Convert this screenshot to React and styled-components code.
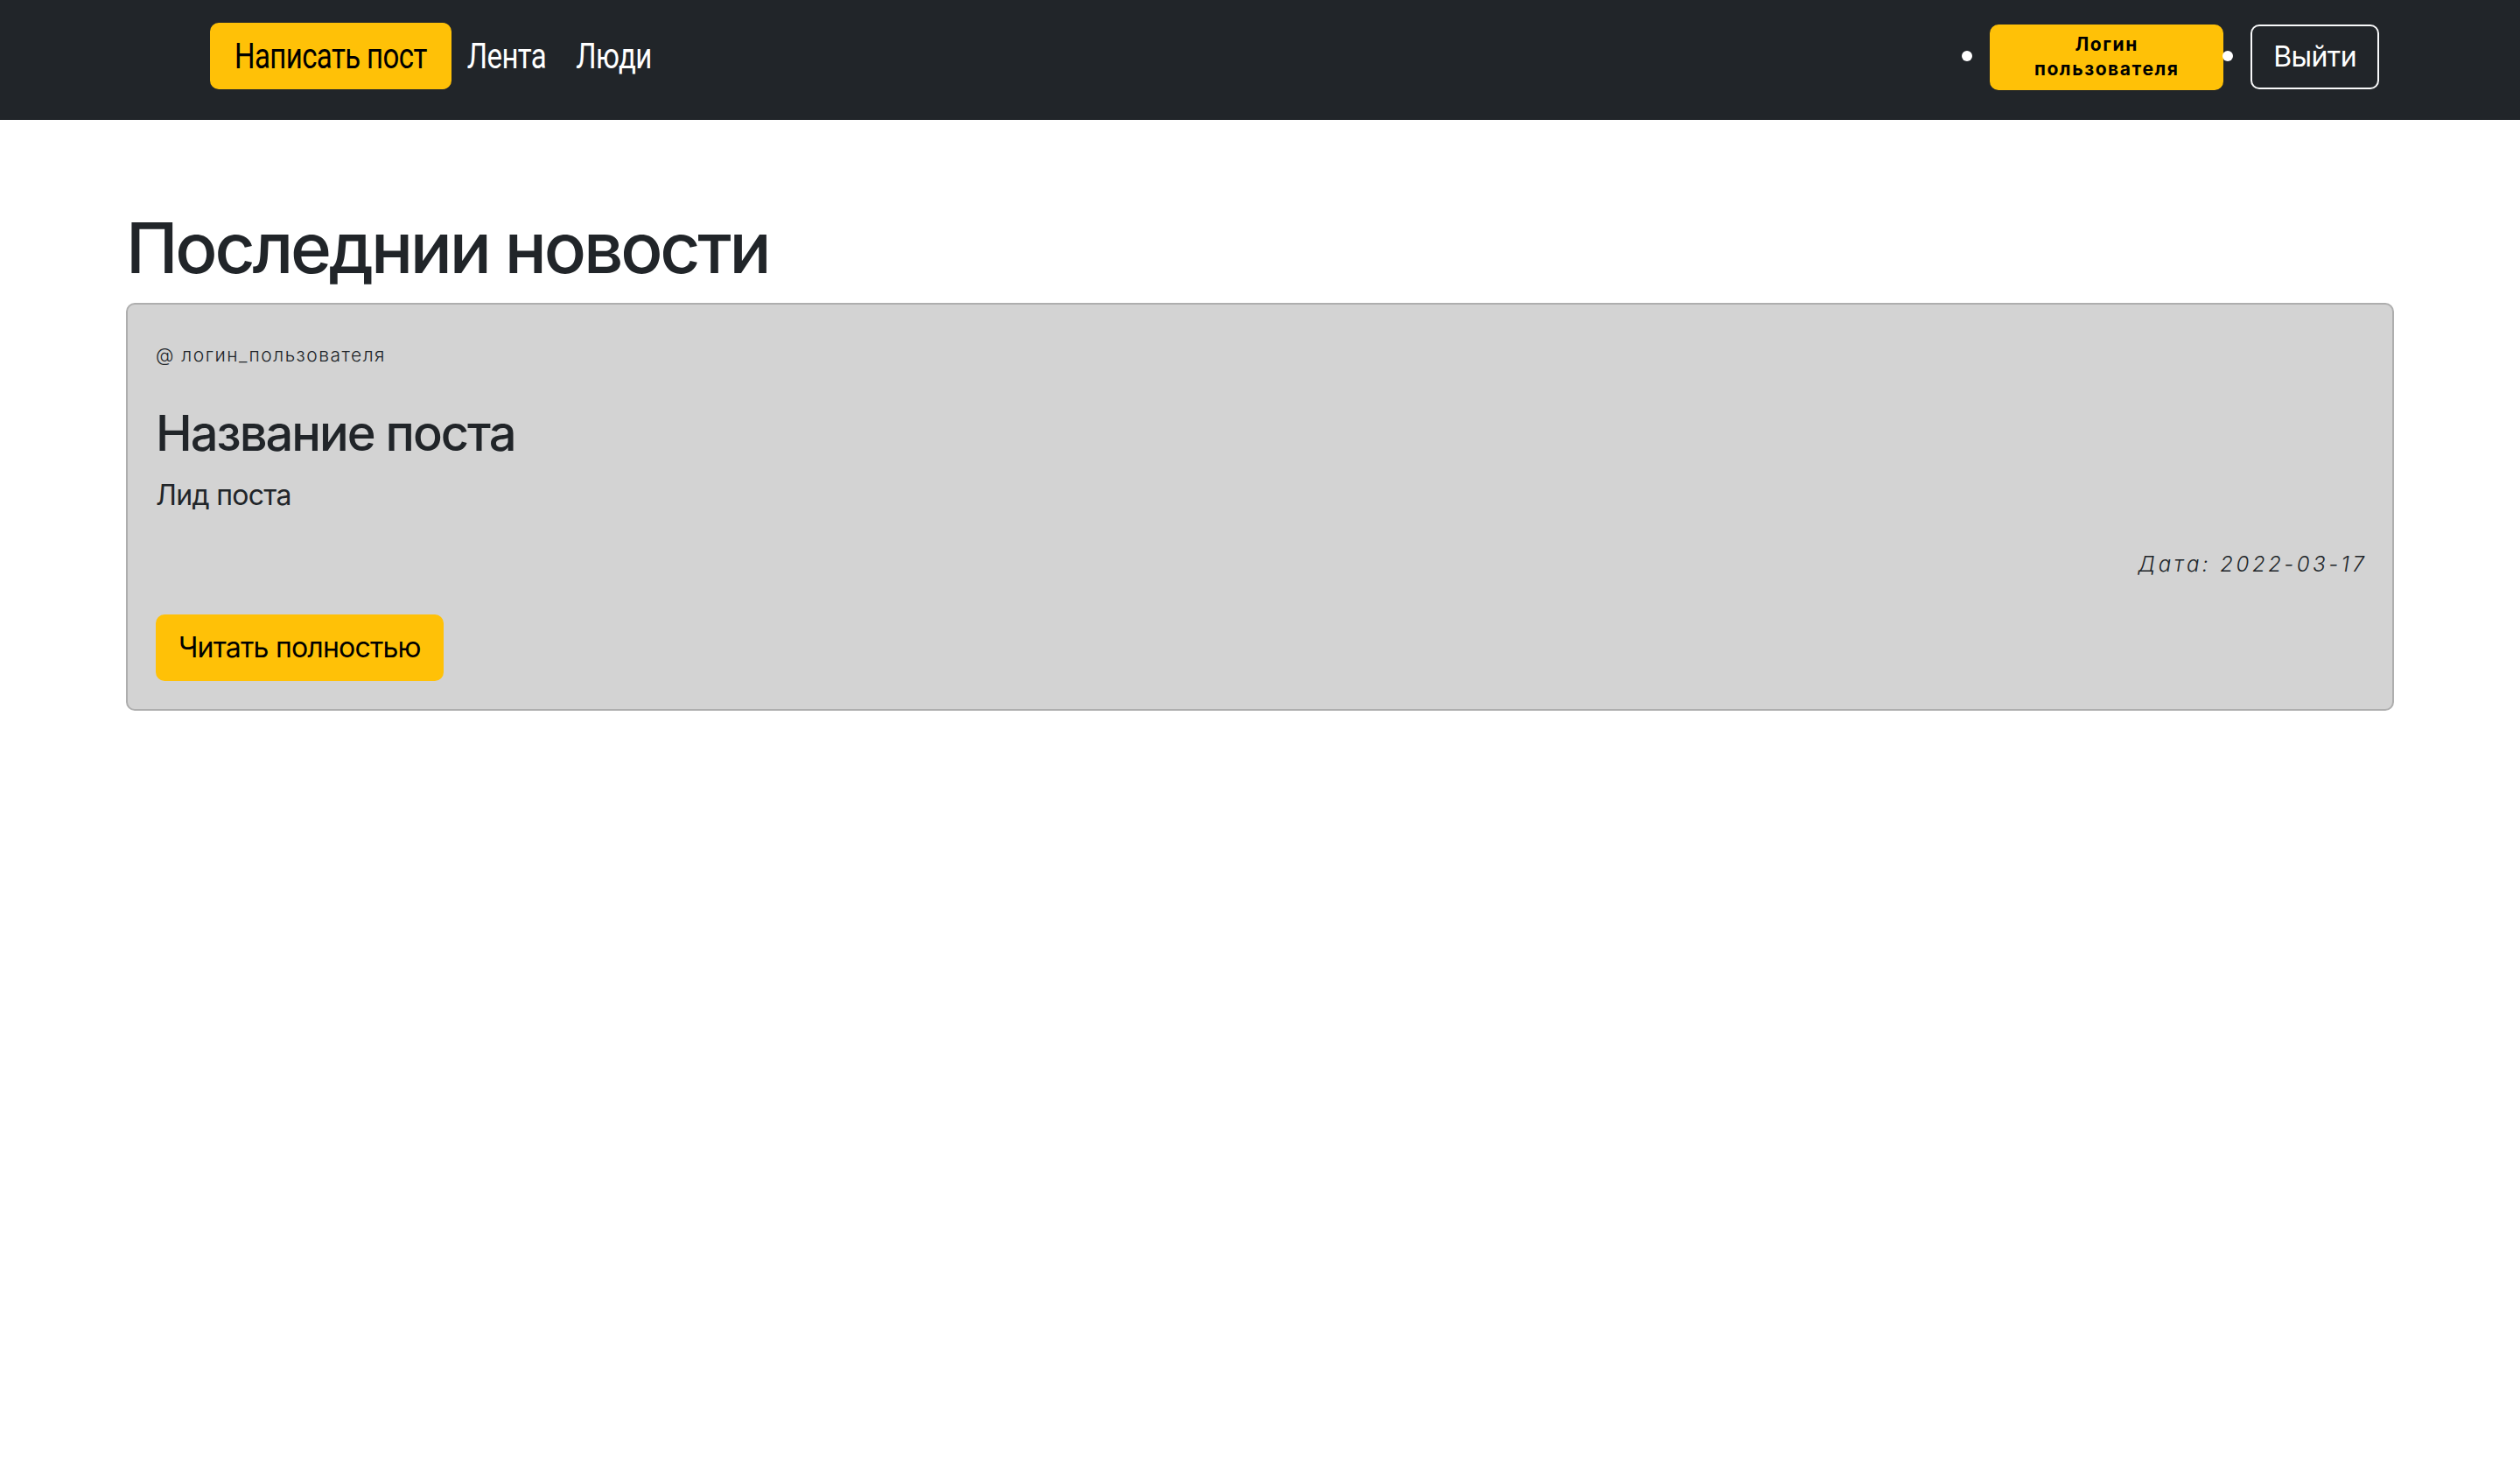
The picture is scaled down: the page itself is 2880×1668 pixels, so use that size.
import styled, { createGlobalStyle } from "styled-components";

const GlobalStyle = createGlobalStyle`
  body {
    margin: 0;
    background: #fff;
    color: #212529;
    font-family: Inter, "Noto Sans", sans-serif;
  }
`;

const App = () => {
  return (
    <>
      <GlobalStyle />
      <Navbar>
        <NavLeft>
          <WriteButton>
            <TallText>Написать пост</TallText>
          </WriteButton>
          <NavLink href="#">
            <TallText>Лента</TallText>
          </NavLink>
          <NavLink href="#">
            <TallText>Люди</TallText>
          </NavLink>
        </NavLeft>
        <UserMenu>
          <MenuItem>
            <LoginButton>
              Логин
              <br />
              пользователя
            </LoginButton>
          </MenuItem>
          <MenuItem>
            <LogoutButton>Выйти</LogoutButton>
          </MenuItem>
        </UserMenu>
      </Navbar>

      <Main>
        <Heading>Последнии новости</Heading>
        <PostCard>
          <Author>
            <small>@ логин_пользователя</small>
          </Author>
          <PostTitle>Название поста</PostTitle>
          <Lead>Лид поста</Lead>
          <PostDate>Дата: 2022-03-17</PostDate>
          <ReadButton>Читать полностью</ReadButton>
        </PostCard>
      </Main>
    </>
  );
};

export default App;

const Navbar = styled.nav`
  display: flex;
  justify-content: space-between;
  align-items: flex-start;
  height: 137px;
  padding: 26px 161px 0 240px;
  box-sizing: border-box;
  background: #212529;
`;

const NavLeft = styled.div`
  display: flex;
  align-items: center;
  font-family: Roboto, "Liberation Sans", sans-serif;
  font-size: 33px;
  letter-spacing: -0.6px;
`;

// the left part of the bar is drawn with tall, narrow letters
const TallText = styled.span`
  display: inline-block;
  transform: scaleY(1.24);
`;

const YellowButton = styled.button`
  background: #ffc107;
  border: 2px solid #ffc107;
  border-radius: 10px;
  color: #000;
  font-family: inherit;
  line-height: 48px;
  padding: 12px 24px;
  cursor: pointer;
`;

const WriteButton = styled(YellowButton)`
  font-size: inherit;
  letter-spacing: inherit;
  padding: 12px 26px;
`;

const ReadButton = styled(YellowButton)`
  font-size: 32px;
  letter-spacing: -0.8px;
`;

const NavLink = styled.a`
  color: #fff;
  text-decoration: none;
  line-height: 48px;
  padding: 0 16px 0 18px;
`;

const UserMenu = styled.ul`
  display: flex;
  gap: 31px;
  list-style: none;
  margin: 2px 0 0;
  padding: 0;
`;

const MenuItem = styled.li`
  position: relative;

  &::before {
    content: "";
    position: absolute;
    left: -32px;
    top: 30px;
    width: 12px;
    height: 12px;
    border-radius: 50%;
    background: #fff;
  }
`;

const LoginButton = styled.button`
  width: 267px;
  background: #ffc107;
  border: 2px solid #ffc107;
  border-radius: 10px;
  color: #000;
  font-family: inherit;
  font-size: 21px;
  font-weight: 700;
  letter-spacing: 1.6px;
  line-height: 28px;
  padding: 7px 4px 8px;
  text-align: center;
`;

const LogoutButton = styled.button`
  background: transparent;
  border: 2px solid #f8f9fa;
  border-radius: 10px;
  color: #fff;
  font-family: inherit;
  font-size: 32px;
  letter-spacing: -0.6px;
  line-height: 48px;
  padding: 11px 24px;
`;

const Main = styled.main`
  width: 2640px;
  margin: 0 auto;
  padding: 98px 24px 0;
  box-sizing: border-box;
`;

const Heading = styled.h1`
  font-size: 80px;
  font-weight: 500;
  letter-spacing: -3.2px;
  line-height: 96px;
  margin: 0 0 15px;
`;

const PostCard = styled.article`
  background: #d3d3d3;
  border: 2px solid #aeaeae;
  border-radius: 10px;
  padding: 32px;
`;

const Author = styled.p`
  margin: 0 0 34px;
  font-size: 32px;
  line-height: 44px;

  small {
    font-size: 21px;
    font-weight: 300;
    letter-spacing: 1.5px;
  }
`;

const PostTitle = styled.h3`
  font-size: 56px;
  font-weight: 500;
  letter-spacing: -2px;
  line-height: 1.2;
  margin: 0 0 13px;
`;

const Lead = styled.p`
  font-size: 32px;
  letter-spacing: -0.7px;
  line-height: 48px;
  margin: 0;
`;

const PostDate = styled.p`
  text-align: right;
  font-size: 24px;
  font-weight: 300;
  font-style: italic;
  letter-spacing: 3.5px;
  line-height: 36px;
  margin: 37px -3.5px 39px 0;
`;
